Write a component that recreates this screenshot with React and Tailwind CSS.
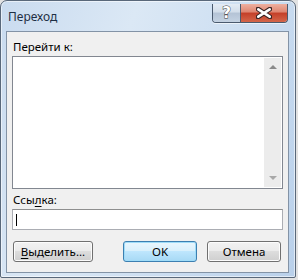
import React from 'react';

const font = { fontFamily: '"Noto Sans", "Open Sans", Arial, sans-serif' };

function CaptionButtons() {
  return (
    <div className="flex mt-[3px] mr-[7px] rounded-b-[4px] border border-[#4a5a6e] border-t-0 overflow-hidden shadow-[0_1px_0_rgba(255,255,255,0.6)]">
      {/* help */}
      <div className="w-[28px] h-[18px] flex items-center justify-center border-r border-[#4a5a6e] bg-[linear-gradient(#e4ecf5_0%,#d2dde9_45%,#b4c3d5_50%,#c4d2e2_100%)]">
        <span className="text-[15px] font-bold leading-none text-white [-webkit-text-stroke:0.9px_#3b3b3b] [paint-order:stroke_fill]" style={{ fontFamily: '"DejaVu Sans", sans-serif' }}>?</span>
      </div>
      {/* close */}
      <div className="w-[46px] h-[18px] flex items-center justify-center bg-[linear-gradient(#eeb0a0_0%,#de8570_45%,#c43f28_50%,#d4664a_100%)]">
        <svg width="16" height="12" viewBox="0 0 16 12">
          <path d="M2 2 L14 10 M14 2 L2 10" stroke="#3b2525" strokeWidth="4.6" strokeLinecap="round" />
          <path d="M2.3 2.3 L13.7 9.7 M13.7 2.3 L2.3 9.7" stroke="#ffffff" strokeWidth="2.6" strokeLinecap="round" />
        </svg>
      </div>
    </div>
  );
}

function Button({ children, focused, className }) {
  return (
    <div
      className={
        'h-[21px] rounded-[3px] border flex items-center justify-center text-[11.5px] text-black ' +
        (focused
          ? 'border-[#3c7fb1] bg-[linear-gradient(#eaf6fd_0%,#d9f0fc_45%,#bee6fd_50%,#a7d9f5_100%)] shadow-[inset_0_0_0_1px_#9fdcf8] '
          : 'border-[#707070] bg-[linear-gradient(#f2f2f2_0%,#ebebeb_45%,#dddddd_50%,#cfcfcf_100%)] shadow-[inset_0_0_0_1px_#fcfcfc] ') +
        className
      }
    >
      {children}
    </div>
  );
}

export default function App() {
  return (
    <div className="w-[298px] h-[280px] bg-[#e2e2e2] overflow-hidden" style={font}>
      <div className="w-[296px] h-[278px] rounded-t-[7px] rounded-b-[2px] border border-[#59687a] bg-[linear-gradient(110deg,#c9dbef_0%,#dbe8f5_35%,#cfe0f2_60%,#b9d0ea_100%)] flex flex-col shadow-[inset_0_0_0_1px_rgba(255,255,255,0.55)]">
        {/* title bar */}
        <div className="h-[30px] flex items-start justify-between">
          <span className="ml-[7px] mt-[8px] text-[12px] leading-[16px] text-[#1e2f44]">Переход</span>
          <CaptionButtons />
        </div>

        {/* client area */}
        <div className="ml-[5px] mr-[6px] h-[242px] border border-[#8393a6] bg-[#f0f0f0] flex flex-col pl-[5px] pt-[7px]">
          <div className="text-[11.5px] leading-[16px] text-black pl-[1px]">Перейти к:</div>
          <div className="mt-[1px] w-[271px] h-[133px] border border-[#828790] bg-white flex justify-end p-[1px]">
            <div className="w-[17px] h-full bg-[#ececec] flex flex-col justify-between items-center py-[7px]">
              <div className="w-0 h-0 border-l-[4px] border-r-[4px] border-b-[4px] border-l-transparent border-r-transparent border-b-[#8a8a8a]" />
              <div className="w-0 h-0 border-l-[4px] border-r-[4px] border-t-[4px] border-l-transparent border-r-transparent border-t-[#a8a8a8]" />
            </div>
          </div>

          <div className="mt-[3px] text-[11.5px] leading-[16px] text-black pl-[1px]">
            Ссы<span className="underline underline-offset-2">л</span>ка:
          </div>
          <div className="mt-[1px] w-[271px] h-[21px] border border-[#abadb3] border-t-[#8e8f8f] bg-white flex items-center pl-[3px]">
            <div className="w-[1px] h-[12px] bg-black" />
          </div>

          <div className="mt-[11px] flex">
            <Button className="w-[80px] ml-[1px]">
              <span><span className="underline underline-offset-2">В</span>ыделить...</span>
            </Button>
            <Button focused className="w-[74px] ml-[30px]">OK</Button>
            <Button className="w-[74px] ml-[10px]">Отмена</Button>
          </div>
        </div>
      </div>
    </div>
  );
}
